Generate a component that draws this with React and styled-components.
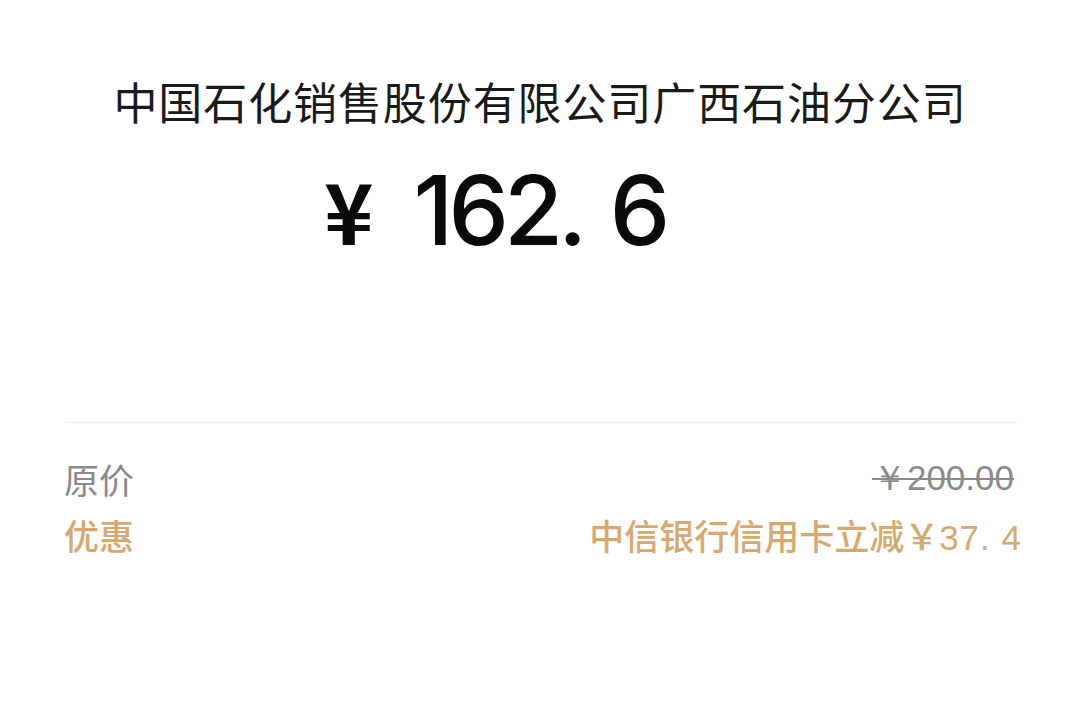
import React from "react";
import styled, { createGlobalStyle } from "styled-components";

const Global = createGlobalStyle`
  html, body { margin: 0; padding: 0; background: #fff; }
  body { font-family: "Noto Sans CJK SC", "Noto Sans", sans-serif; }
`;

const Page = styled.div`
  width: 1080px;
  height: 719px;
  background: #fff;
  display: flex;
  flex-direction: column;
`;

const Merchant = styled.h1`
  margin: 69px 0 0;
  font-size: 44px;
  font-weight: 400;
  line-height: 64px;
  color: #1a1a1a;
  text-align: center;
  letter-spacing: 0.9px;
`;

const Amount = styled.div`
  margin-top: 26px;
  padding-left: 324px;
  height: 100px;
  display: flex;
  align-items: baseline;
  color: #0a0a0a;
  line-height: 100px;
`;

const Currency = styled.span`
  font-size: 84px;
  font-weight: 700;
  margin-right: 40px;
`;

const Value = styled.span`
  font-family: Inter, "Liberation Sans", sans-serif;
  font-size: 96px;
  font-weight: 500;
  letter-spacing: -5px;
  word-spacing: 8px;
`;

const Divider = styled.hr`
  margin: 163px 63px 0 65px;
  border: none;
  border-top: 1px solid #ececec;
`;

const Details = styled.div`
  margin-top: 27px;
  padding: 0 58px 0 64px;
  display: flex;
  flex-direction: column;
`;

const Row = styled.div`
  display: flex;
  justify-content: space-between;
  align-items: center;
  height: 56px;
  font-size: 35px;
  font-weight: ${(p) => (p.$gold ? 500 : 400)};
  color: ${(p) => (p.$gold ? "#d6aa6f" : "#8a8a8a")};
`;

const Struck = styled.span`
  text-decoration: line-through;
  text-decoration-thickness: 2px;
  font-family: "Liberation Sans", "Noto Sans", sans-serif;
  margin-right: 8px;
`;

const Num = styled.span`
  font-family: "Liberation Sans", "Noto Sans", sans-serif;
  letter-spacing: 1px;
`;

export default function App() {
  return (
    <Page>
      <Global />
      <Merchant>中国石化销售股份有限公司广西石油分公司</Merchant>
      <Amount>
        <Currency>¥</Currency>
        <Value>162. 6</Value>
      </Amount>
      <Divider />
      <Details>
        <Row>
          <span>原价</span>
          <Struck>￥200.00</Struck>
        </Row>
        <Row $gold>
          <span>优惠</span>
          <span>
            中信银行信用卡立减￥<Num>37. 4</Num>
          </span>
        </Row>
      </Details>
    </Page>
  );
}
